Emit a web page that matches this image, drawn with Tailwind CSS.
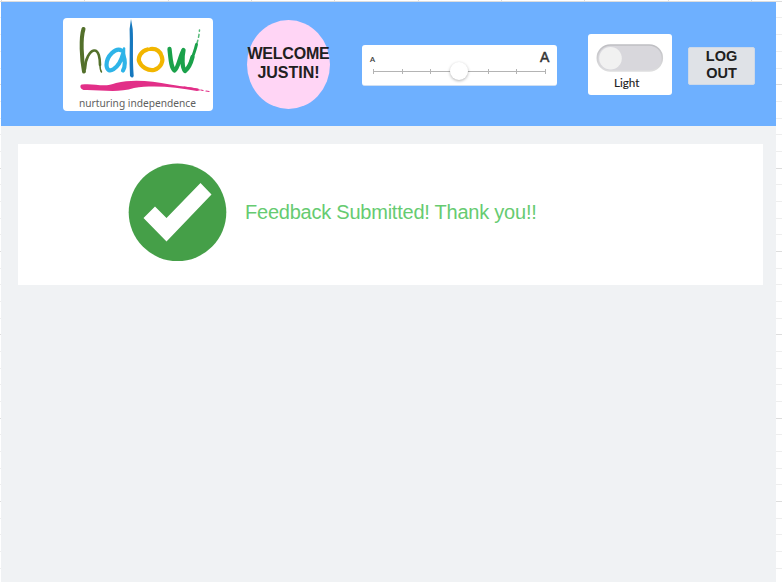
<!DOCTYPE html>
<html lang="en">
<head>
<meta charset="utf-8">
<title>Feedback submitted</title>
<script src="https://cdn.jsdelivr.net/npm/@tailwindcss/browser@4"></script>
</head>
<body class="relative h-[582px] w-[782px] overflow-hidden bg-white font-['Liberation_Sans',sans-serif]">
<!-- Ruled canvas behind the page -->
<svg class="absolute inset-0" width="782" height="582" shape-rendering="crispEdges" fill="none">
  <path stroke="#eeeeee" d="M0 17.5H782M0 34.5H782M0 51.5H782M0 68.5H782M0 101.5H782M0 118.5H782M0 134.5H782M0 151.5H782M0 184.5H782M0 201.5H782M0 218.5H782M0 234.5H782M0 268.5H782M0 284.5H782M0 301.5H782M0 318.5H782M0 351.5H782M0 368.5H782M0 384.5H782M0 401.5H782M0 434.5H782M0 451.5H782M0 468.5H782M0 484.5H782M0 518.5H782M0 534.5H782M0 551.5H782M0 568.5H782"/>
  <path stroke="#dddddd" d="M0 1.5H782M0 84.5H782M0 168.5H782M0 251.5H782M0 334.5H782M0 418.5H782M0 501.5H782M1.5 0V1M84.5 0V1M168.5 0V1M251.5 0V1M334.5 0V1M418.5 0V1M501.5 0V1M584.5 0V1M668.5 0V1M751.5 0V1"/>
</svg>
<div class="relative ml-px pt-[2px] w-[775px]">
  <header class="flex h-[124px] items-start bg-[#6eb0ff] pl-[62px]">
    <div class="mt-4 h-[93px] w-[150px] rounded-[4px] bg-white">
      <svg class="overflow-visible" width="150" height="93" viewBox="63 18 150 93" fill="none" stroke-linecap="round" stroke-linejoin="round">
        <path stroke="#53702b" stroke-width="4" d="M83.500 29C80.500 38 81.500 59 84 71.500"/>
        <path stroke="#53702b" stroke-width="2.600" d="M85 69C85 59 90 51 94 50.500C99 50 100 59 100 65"/>
        <path stroke="#53702b" stroke-width="1.500" d="M100 65Q100 70 101.500 72"/>
        <path stroke="#2eb4e8" stroke-width="4.200" d="M121.500 50.500C116 47 106.500 56 106.500 65C107 76 119 69 123 54C125.500 61 125 67 123 70.500"/>
        <path stroke="#2eb4e8" stroke-width="2.500" d="M124 48.500V57"/>
        <path fill="#1678be" d="M129.600 29L131 19L132.700 29C133.500 42 132.300 57 133.700 76Q132.500 79 130 76C129 60 130.300 44 129.600 29Z"/>
        <path stroke="#f2b600" stroke-width="4.200" d="M147.500 49.500C141 51 138 57 139 61C141 67 148 71 154 70C161 68 164 61 161.500 56C160 51 156 48.500 150.500 49"/>
        <path stroke="#1aa14a" stroke-width="4.300" d="M169.500 49C170.500 58 171 68 174.500 70.500C178 69 180 56 183.500 50C182 57 182 68 185 71C189 68 191 63 192.500 57"/>
        <path stroke="#1aa14a" stroke-width="3" d="M191 61Q195 51 196.500 44.500"/>
        <path stroke="#1aa14a" stroke-width="1.500" stroke-opacity=".75" stroke-dasharray="3 3" d="M197 43Q199 37 199.500 30"/>
        <path fill="#e22f88" d="M82 84.500C95 83 104 88 116 83C133 79 151 81 170 84.500C184 87 193 87 201 90L197 91C176 87 153 85 134 88C118 93 103 90 87 90C80 91 79 85 82 84.500Z"/>
        <path stroke="#e22f88" stroke-width="1.200" d="M184 87L198 89M201 90L203 90.500M206 91L209 91.500"/>
        <text x="79" y="106.500" textLength="117" lengthAdjust="spacingAndGlyphs" fill="#606060" font-family="Noto Sans, sans-serif" font-size="11.500">nurturing independence</text>
      </svg>
    </div>
    <div class="ml-[34px] mt-[18px] flex h-[89px] w-[83px] items-center justify-center rounded-[50%] bg-[#ffd5f5]">
      <p class="w-[86px] shrink-0 whitespace-nowrap pb-[4px] text-center text-[16px] font-bold leading-[19px] text-[#202020]"><span class="tracking-[-0.2px]">WELCOME</span><br><span>JUSTIN!</span></p>
    </div>
    <div class="ml-[32px] mt-[43px] h-[41px] w-[195px] rounded-[3px] border-b border-[#cfdff2] bg-white">
      <svg width="195" height="40" viewBox="362 45 195 40">
        <g fill="#333" font-family="Liberation Sans, sans-serif">
          <text x="370" y="61.500" font-size="7.500" stroke="#333" stroke-width=".2">A</text>
          <text x="540" y="61.500" font-size="14" stroke="#333" stroke-width=".5">A</text>
        </g>
        <path d="M373 71.500H545M373.500 69V74M402.500 69V74M430.500 69V74M488.500 69V74M516.500 69V74M545.500 69V74" stroke="#b4b4b4"/>
        <circle cx="459" cy="71" r="9" fill="white" class="drop-shadow-[0_1px_1.5px_rgb(0_0_0/0.3)]"/>
      </svg>
    </div>
    <div class="ml-[31px] mt-8 h-[61px] w-[84px] rounded-[3px] bg-white">
      <svg width="84" height="61" viewBox="588 34 84 61">
        <defs><linearGradient id="track" x2="0" y2="1"><stop stop-color="#bebec2"/><stop offset="1" stop-color="#dededf"/></linearGradient></defs>
        <rect x="597.300" y="45" width="65" height="26" rx="13" fill="#d8d7dc" stroke="url(#track)" stroke-width="1.600"/>
        <circle cx="610.500" cy="58.300" r="11.300" fill="#f1f1f1"/>
        <text x="614" y="87" textLength="25.500" lengthAdjust="spacingAndGlyphs" fill="#202020" stroke="#202020" stroke-width=".1" font-family="Lato, sans-serif" font-size="11.500">Light</text>
      </svg>
    </div>
    <button class="ml-4 mt-[45px] h-[38px] w-[67px] rounded-[2px] border border-[#cdd9e9] bg-[#dfe2e7] pb-[4px] text-[14.500px] font-bold leading-[17px] text-[#202020]">LOG<br>OUT</button>
  </header>
  <main class="h-[456px] bg-[#f0f2f4] px-[17px] pt-[18px]">
    <section class="flex h-[141px] w-[745px] items-start bg-white pl-[110px] pt-[19px]">
      <svg width="99" height="99" viewBox="128 163 99 99">
        <circle cx="177.500" cy="212.300" r="48.800" fill="#459f48"/>
        <path fill="white" d="M143.500 218L155 206.500L166.500 218L200.500 183L211.500 194.500L166.500 241.500Z"/>
      </svg>
      <p class="ml-[18px] mt-[37px] whitespace-nowrap text-[20px] leading-6 tracking-[-0.23px] text-[#66cb71]">Feedback Submitted! Thank you!!</p>
    </section>
  </main>
</div>
</body>
</html>
